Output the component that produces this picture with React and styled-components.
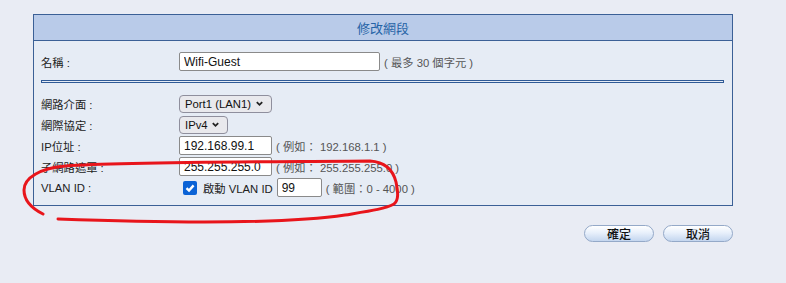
import { Fragment } from 'react';
import styled, { createGlobalStyle } from 'styled-components';

const Global = createGlobalStyle`
  html, body {
    margin: 0;
    background: #e9ecf4;
  }
  body {
    font-family: "Liberation Sans", Arial, "Noto Sans CJK TC", sans-serif;
    font-size: 11.3px;
    color: #222;
  }
`;

const Page = styled.div`
  position: relative;
  width: 786px;
  height: 283px;
  padding: 14px 0 0 33px;
  box-sizing: border-box;
`;

const Panel = styled.div`
  width: 700px;
  box-sizing: border-box;
  border: 1px solid #3b6096;
  background: #e6ecf5;
`;

const Header = styled.div`
  height: 25px;
  background: #b9cbe9;
  border-bottom: 1px solid #3b6096;
  display: flex;
  align-items: center;
  justify-content: center;
  color: #2563a6;
  font-size: 13px;
  font-family: "Noto Sans CJK TC", sans-serif;
`;

const Body = styled.div`
  padding: 10px 8px 7px 7px;
`;

const Grid = styled.div`
  display: grid;
  grid-template-columns: 138px 1fr;
  grid-auto-rows: 21px;
  align-items: center;
`;

const Label = styled.div`
  color: #222;
  white-space: nowrap;
`;

const Value = styled.div`
  display: flex;
  align-items: center;
  gap: 4px;
  white-space: nowrap;
`;

const Divider = styled.div`
  height: 1px;
  border: 1px solid #2f5a96;
  background: #e6ecf5;
  margin: 8px 0 10px 0;
`;

const TextInput = styled.input`
  width: ${({ $w }) => $w}px;
  height: 19px;
  box-sizing: border-box;
  border: 1px solid #8a8a8a;
  border-radius: 2px;
  background: #fff;
  padding: 0 3px 0 4px;
  font-family: "Liberation Sans", Arial, sans-serif;
  font-size: 12px;
  color: #111;
  outline: none;
`;

const Select = styled.div`
  width: ${({ $w }) => $w}px;
  height: 18px;
  box-sizing: border-box;
  border: 1px solid #8f8f9d;
  border-radius: 4px;
  background: #e9e9ed;
  display: flex;
  align-items: center;
  justify-content: space-between;
  padding: 0 7px 0 5px;
  font-size: 11.3px;
  color: #111;
  white-space: nowrap;

  svg {
    width: 9px;
    height: 9px;
    fill: none;
    stroke: #222;
    stroke-width: 2;
  }
`;

const Hint = styled.span`
  color: #555;
  white-space: pre;
`;

const Check = styled.span`
  width: 14px;
  height: 14px;
  margin-left: 4px;
  border-radius: 2px;
  background: #0b63d6;
  display: inline-flex;
  align-items: center;
  justify-content: center;

  svg {
    width: 12px;
    height: 12px;
    fill: none;
    stroke: #fff;
    stroke-width: 2.4;
  }
`;

const CheckText = styled.span`
  margin-left: 2px;
  color: #222;
`;

const Actions = styled.div`
  width: 700px;
  display: flex;
  justify-content: flex-end;
  gap: 9px;
  margin-top: 19px;
`;

const Button = styled.button`
  width: 70px;
  height: 17px;
  border: 1px solid #94a9c8;
  border-radius: 9px;
  background: linear-gradient(#ffffff 0%, #e8f0fb 45%, #c4d6ef 100%);
  font-family: "Noto Sans CJK TC", sans-serif;
  font-size: 12px;
  font-weight: 500;
  color: #111;
  padding: 0;
  line-height: 15px;
`;

const Annotation = styled.svg`
  position: absolute;
  left: 0;
  top: 0;
  width: 786px;
  height: 283px;
  pointer-events: none;

  path {
    fill: none;
    stroke: #e8151b;
    stroke-width: 3;
    stroke-linecap: round;
    stroke-linejoin: round;
  }
`;

const Chevron = () => (
  <svg viewBox="0 0 10 10">
    <path d="M2 3.5 L5 6.5 L8 3.5" />
  </svg>
);

const rows = [
  { label: '網路介面 :', select: 'Port1 (LAN1)', w: 93 },
  { label: '網際協定 :', select: 'IPv4', w: 49 },
];

export default function App() {
  return (
    <>
      <Global />
      <Page>
        <Panel>
          <Header>修改網段</Header>
          <Body>
            <Grid>
              <Label>名稱 :</Label>
              <Value>
                <TextInput $w={201} defaultValue="Wifi-Guest" />
                <Hint>( 最多 30 個字元 )</Hint>
              </Value>
            </Grid>
            <Divider />
            <Grid>
              {rows.map((r) => (
                <Fragment key={r.label}>
                  <Label>{r.label}</Label>
                  <Value>
                    <Select $w={r.w}>
                      {r.select}
                      <Chevron />
                    </Select>
                  </Value>
                </Fragment>
              ))}
              <Label>IP位址 :</Label>
              <Value>
                <TextInput $w={93} defaultValue="192.168.99.1" />
                <Hint>( 例如： 192.168.1.1 )</Hint>
              </Value>
              <Label>子網路遮罩 :</Label>
              <Value>
                <TextInput $w={93} defaultValue="255.255.255.0" />
                <Hint>( 例如： 255.255.255.0 )</Hint>
              </Value>
              <Label>VLAN ID :</Label>
              <Value>
                <Check>
                  <svg viewBox="0 0 12 12">
                    <path d="M2.5 6.2 L5 8.6 L9.6 3.4" />
                  </svg>
                </Check>
                <CheckText>啟動 VLAN ID</CheckText>
                <TextInput $w={45} defaultValue="99" />
                <Hint>( 範圍：0 - 4000 )</Hint>
              </Value>
            </Grid>
          </Body>
        </Panel>
        <Actions>
          <Button>確定</Button>
          <Button>取消</Button>
        </Actions>
        <Annotation viewBox="0 0 786 283">
          <path d="M43 214 C33 209, 24 201, 24 190 C24 178, 40 168, 66 166 C120 162, 250 162, 370 161 C385 162, 393 170, 396 182 C398 192, 399 200, 394 204 C385 209, 370 211, 345 215 C300 222, 200 224, 58 219" />
        </Annotation>
      </Page>
    </>
  );
}
